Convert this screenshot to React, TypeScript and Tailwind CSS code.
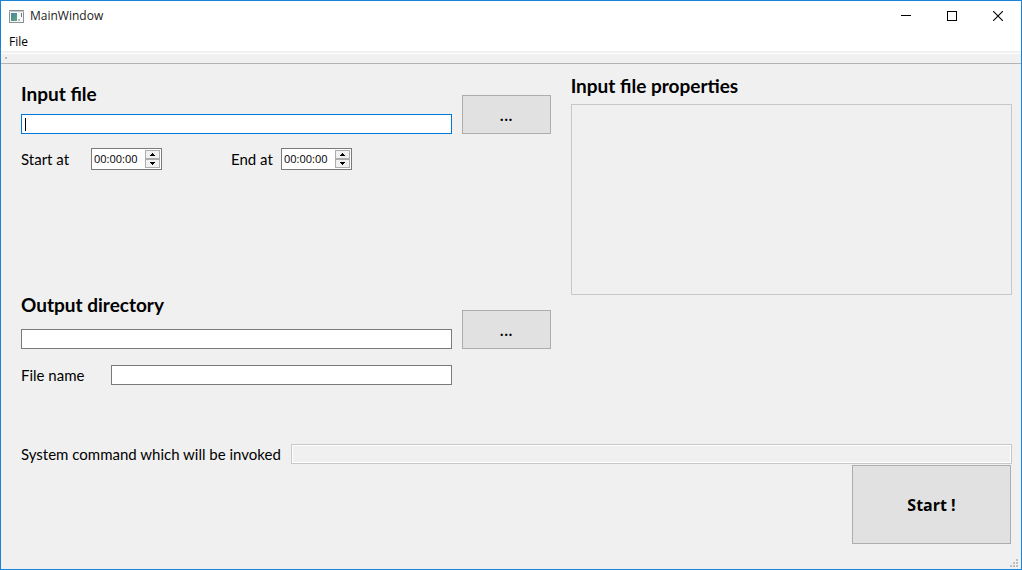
import { useState } from "react";

const FIELD = "h-5 min-w-0 rounded-none border border-[#7a7a7a] bg-white px-1 text-xs outline-none";
const HEADING = "font-[Lato,sans-serif] text-[19px] leading-6 font-bold whitespace-nowrap";
const LABEL = "shrink-0 font-[Lato,sans-serif] text-[15px] leading-5 whitespace-nowrap";
const BUTTON = "shrink-0 border border-[#adadad] bg-[#e1e1e1] hover:border-[#0078d7] hover:bg-[#e5f1fb]";
const BROWSE = `${BUTTON} h-[39px] w-[89px] text-[16px] leading-6 font-semibold`;

const toSeconds = (t: string) => {
  const [h = 0, m = 0, s = 0] = t.split(":").map(Number);
  return h * 3600 + m * 60 + s;
};
const toText = (n: number) =>
  [Math.floor(n / 3600), Math.floor(n / 60) % 60, n % 60]
    .map((v) => String(v).padStart(2, "0"))
    .join(":");

function TimeBox({ id }: { id: string }) {
  const [value, setValue] = useState("00:00:00");
  const step = (d: number) =>
    setValue((v) => toText(Math.min(86399, Math.max(0, (toSeconds(v) || 0) + d))));
  const arrow =
    "flex h-[9px] w-[15px] items-center justify-center border border-[#adadad] bg-[#f0f0f0]";
  return (
    <div className="flex h-[22px] w-[71px] shrink-0 items-center border border-[#7a7a7a] bg-white pr-px">
      <input
        id={id}
        value={value}
        onChange={(e) => setValue(e.target.value)}
        className="min-w-0 flex-1 pl-0.5 font-['Open_Sans',sans-serif] text-[11px] leading-4 outline-none"
      />
      <div className="flex flex-col">
        <button type="button" aria-label="Increase" onClick={() => step(1)} className={arrow}>
          <svg width="5" height="3" viewBox="0 0 5 3" shapeRendering="crispEdges">
            <path d="M2 0h1v1h1v1h1v1H0V2h1V1h1z" />
          </svg>
        </button>
        <button type="button" aria-label="Decrease" onClick={() => step(-1)} className={arrow}>
          <svg width="5" height="3" viewBox="0 0 5 3" shapeRendering="crispEdges">
            <path d="M0 0h5v1H4v1H3v1H2V2H1V1H0z" />
          </svg>
        </button>
      </div>
    </div>
  );
}

function TitleBar() {
  const control = "flex w-[46px] items-center justify-center hover:bg-[#e5e5e5]";
  return (
    <header className="flex h-[30px] items-stretch bg-white pl-2">
      <div className="flex flex-1 items-center gap-1.5">
        <svg width="15" height="13" viewBox="0 0 15 13" shapeRendering="crispEdges" aria-hidden="true">
          <defs>
            <linearGradient id="screen" x1="0" y1="0" x2="1" y2="1">
              <stop offset="0" stopColor="#4d7fa8" />
              <stop offset="1" stopColor="#5fa777" />
            </linearGradient>
          </defs>
          <rect width="15" height="13" fill="#8a8f94" />
          <rect x="1" y="1" width="13" height="11" fill="#f7f8f9" />
          <rect x="0" y="1" width="15" height="1" fill="#c4c8cb" />
          <rect x="2" y="3" width="6" height="8" fill="url(#screen)" />
          <rect x="9" y="9" width="2" height="2" fill="#b3b8bb" />
          <rect x="12" y="3" width="1" height="4" fill="#5f7f78" />
        </svg>
        <h1 className="font-['Open_Sans',sans-serif] text-[12px] leading-4 text-[#222]">MainWindow</h1>
      </div>
      <button type="button" aria-label="Minimize" className={control}>
        <svg width="10" height="10" shapeRendering="crispEdges"><path d="M0 4h10v1H0z" /></svg>
      </button>
      <button type="button" aria-label="Maximize" className={control}>
        <svg width="10" height="10" shapeRendering="crispEdges">
          <rect x=".5" y=".5" width="9" height="9" fill="none" stroke="#000" />
        </svg>
      </button>
      <button type="button" aria-label="Close" className={control}>
        <svg width="10" height="10"><path d="M0 0l10 10M10 0L0 10" stroke="#000" strokeWidth="1.1" /></svg>
      </button>
    </header>
  );
}

export default function App() {
  const [input, setInput] = useState("");
  const [output, setOutput] = useState("");
  const [name, setName] = useState("");
  return (
    <div className="flex min-h-screen flex-col border border-[#1883d7] bg-[#f0f0f0] font-['Open_Sans',sans-serif] text-black">
      <TitleBar />
      <nav className="flex h-5 items-end bg-white pb-px pl-2">
        <button type="button" className="text-[12px] leading-4">File</button>
      </nav>
      <div className="flex h-[13px] border-t border-b border-t-[#f0f0f0] border-b-[#b4b4b4] pt-px">
        <div className="h-full w-full border-t border-white pt-[3px] pl-1">
          <div className="size-0.5 bg-[#b8b8b8]" />
        </div>
      </div>

      <main className="flex flex-1 flex-col pt-2.5 pl-5">
        <div className="grid grid-cols-[6fr_5fr] gap-5 pr-[9px]">
          <section className="flex min-w-0 flex-col pt-2">
            <div className="flex items-end gap-2.5">
              <div className="flex min-w-0 flex-1 flex-col gap-2">
                <label htmlFor="input-file" className={HEADING}>Input file</label>
                <div className="relative flex">
                  <input
                    id="input-file"
                    value={input}
                    onChange={(e) => setInput(e.target.value)}
                    className="peer h-5 min-w-0 flex-1 border border-[#0078d7] bg-white px-1 text-xs outline-none"
                  />
                  <span className="absolute top-1 left-1 hidden h-[13px] w-px bg-black peer-[[value='']]:block" />
                </div>
              </div>
              <button type="button" aria-label="Browse input file" className={BROWSE}>...</button>
            </div>
            <div className="flex items-center pt-3.5">
              <label htmlFor="start-at" className={`${LABEL} w-[70px]`}>Start at</label>
              <TimeBox id="start-at" />
              <label htmlFor="end-at" className={`${LABEL} ml-[69px] w-[50px]`}>End at</label>
              <TimeBox id="end-at" />
            </div>
            <div className="flex items-end gap-2.5 pt-[123px]">
              <div className="flex min-w-0 flex-1 flex-col gap-3">
                <label htmlFor="output-dir" className={HEADING}>Output directory</label>
                <input id="output-dir" value={output} onChange={(e) => setOutput(e.target.value)} className={FIELD} />
              </div>
              <button type="button" aria-label="Browse output directory" className={BROWSE}>...</button>
            </div>
            <div className="flex items-center pt-4 pr-[99px]">
              <label htmlFor="file-name" className={`${LABEL} w-[90px]`}>File name</label>
              <input id="file-name" value={name} onChange={(e) => setName(e.target.value)} className={`${FIELD} flex-1`} />
            </div>
          </section>

          <section className="flex min-w-0 flex-col gap-1.5">
            <h2 className={HEADING}>Input file properties</h2>
            <div className="h-[191px] border border-[#c8c8c8]" />
          </section>
        </div>

        <div className="flex items-center pt-[59px] pr-[9px]">
          <label htmlFor="command" className={`${LABEL} w-[270px]`}>System command which will be invoked</label>
          <input
            id="command"
            readOnly
            className="h-5 min-w-0 flex-1 border border-[#c8c8c8] bg-[#f0f0f0] px-1 text-xs inset-ring inset-ring-white outline-none"
          />
        </div>
        <div className="flex justify-end pt-px pr-2.5">
          <button type="button" className={`${BUTTON} h-[79px] w-[159px] text-[16px] leading-6 font-bold`}>Start !</button>
        </div>
        <div className="mt-auto flex justify-end pr-[3px] pb-0.5">
          <svg width="8" height="8" viewBox="0 0 8 8" fill="#bfbfbf" shapeRendering="crispEdges" aria-hidden="true">
            <path d="M6 0h2v2H6zM3 3h2v2H3zM6 3h2v2H6zM0 6h2v2H0zM3 6h2v2H3zM6 6h2v2H6z" />
          </svg>
        </div>
      </main>
    </div>
  );
}
